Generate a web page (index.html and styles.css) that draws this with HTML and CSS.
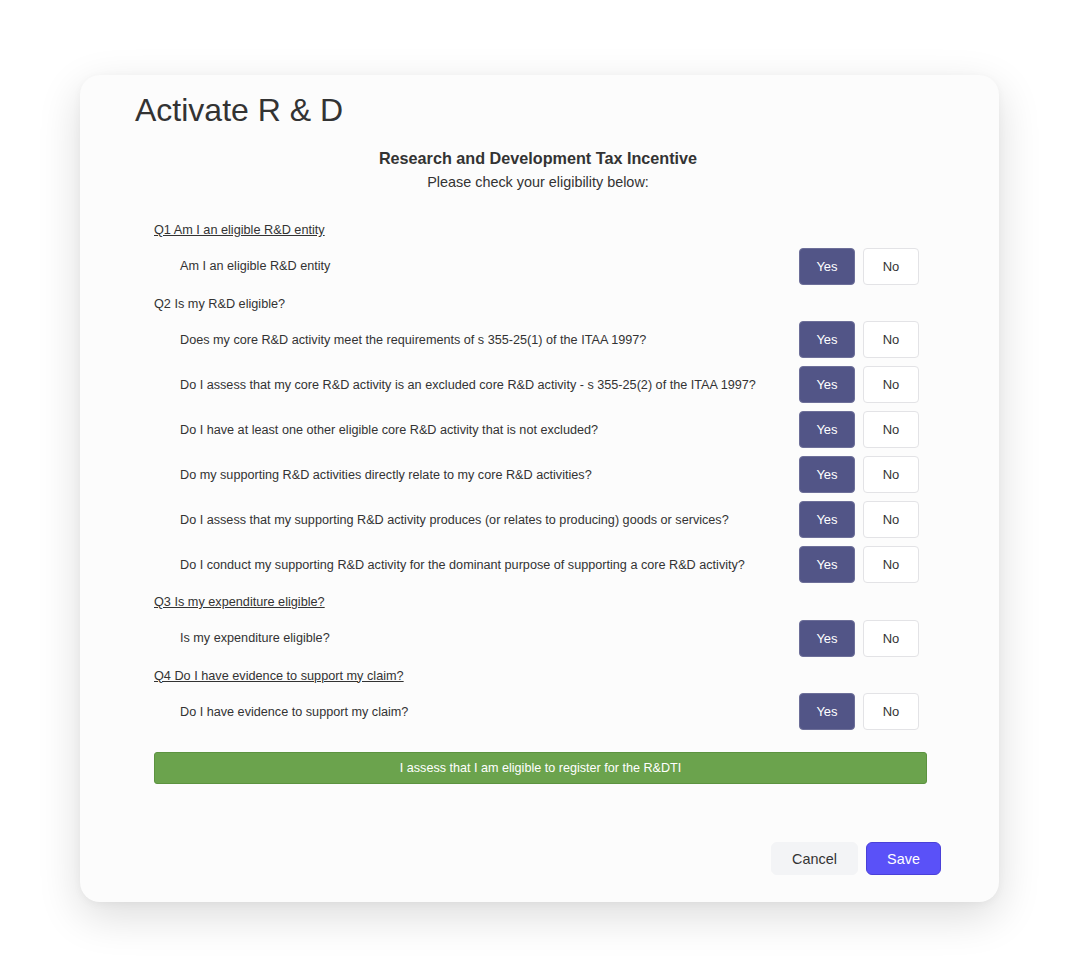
FILE: index.html
```html
<!DOCTYPE html>
<html lang="en">
<head>
<meta charset="utf-8">
<title>Activate R &amp; D</title>
<link rel="stylesheet" href="styles.css">
</head>
<body>
<div class="modal">
  <h1 class="title">Activate R &amp; D</h1>
  <div class="intro">
    <div class="intro-head">Research and Development Tax Incentive</div>
    <div class="intro-sub">Please check your eligibility below:</div>
  </div>
  <div class="form">
    <div class="section">
      <div class="q-label underline">Q1 Am I an eligible R&amp;D entity</div>
      <div class="items">
        <div class="item"><span class="item-text">Am I an eligible R&amp;D entity</span><div class="choice"><button class="btn-yes">Yes</button><button class="btn-no">No</button></div></div>
      </div>
    </div>
    <div class="section">
      <div class="q-label">Q2 Is my R&amp;D eligible?</div>
      <div class="items">
        <div class="item"><span class="item-text">Does my core R&amp;D activity meet the requirements of s 355-25(1) of the ITAA 1997?</span><div class="choice"><button class="btn-yes">Yes</button><button class="btn-no">No</button></div></div>
        <div class="item"><span class="item-text">Do I assess that my core R&amp;D activity is an excluded core R&amp;D activity - s 355-25(2) of the ITAA 1997?</span><div class="choice"><button class="btn-yes">Yes</button><button class="btn-no">No</button></div></div>
        <div class="item"><span class="item-text">Do I have at least one other eligible core R&amp;D activity that is not excluded?</span><div class="choice"><button class="btn-yes">Yes</button><button class="btn-no">No</button></div></div>
        <div class="item"><span class="item-text">Do my supporting R&amp;D activities directly relate to my core R&amp;D activities?</span><div class="choice"><button class="btn-yes">Yes</button><button class="btn-no">No</button></div></div>
        <div class="item"><span class="item-text">Do I assess that my supporting R&amp;D activity produces (or relates to producing) goods or services?</span><div class="choice"><button class="btn-yes">Yes</button><button class="btn-no">No</button></div></div>
        <div class="item"><span class="item-text">Do I conduct my supporting R&amp;D activity for the dominant purpose of supporting a core R&amp;D activity?</span><div class="choice"><button class="btn-yes">Yes</button><button class="btn-no">No</button></div></div>
      </div>
    </div>
    <div class="section">
      <div class="q-label underline">Q3 Is my expenditure eligible?</div>
      <div class="items">
        <div class="item"><span class="item-text">Is my expenditure eligible?</span><div class="choice"><button class="btn-yes">Yes</button><button class="btn-no">No</button></div></div>
      </div>
    </div>
    <div class="section">
      <div class="q-label underline">Q4 Do I have evidence to support my claim?</div>
      <div class="items">
        <div class="item"><span class="item-text">Do I have evidence to support my claim?</span><div class="choice"><button class="btn-yes">Yes</button><button class="btn-no">No</button></div></div>
      </div>
    </div>
    <div class="result">I assess that I am eligible to register for the R&amp;DTI</div>
  </div>
  <div class="footer">
    <button class="btn-cancel">Cancel</button>
    <button class="btn-save">Save</button>
  </div>
</div>
</body>
</html>
```

FILE: styles.css
```css
* { box-sizing: border-box; }
html, body { margin: 0; padding: 0; background: #ffffff; }
body {
  font-family: "Liberation Sans", Arial, sans-serif;
  color: #333333;
  width: 1085px;
  height: 980px;
  overflow: hidden;
}
.modal {
  margin: 75px 0 0 80px;
  width: 919px;
  height: 827px;
  background: #fcfcfc;
  border-radius: 20px;
  box-shadow: 0 14px 44px rgba(0, 0, 0, 0.14), 0 2px 8px rgba(0, 0, 0, 0.04);
  padding: 16px 58px 27px 55px;
  display: flex;
  flex-direction: column;
}
.title {
  margin: 0;
  font-size: 32px;
  line-height: 38px;
  font-weight: normal;
  color: #333333;
}
.intro {
  margin-top: 18px;
  text-align: center;
}
.intro-head {
  font-size: 16.2px;
  font-weight: bold;
  line-height: 22px;
  color: #333333;
}
.intro-sub {
  font-size: 14.4px;
  line-height: 22px;
  margin-top: 2px;
  color: #333333;
}
.form {
  margin: 28px 14px 0 19px;
  display: flex;
  flex-direction: column;
  gap: 10px;
}
.section {
  display: flex;
  flex-direction: column;
}
.q-label {
  font-size: 12.7px;
  line-height: 18px;
  color: #333333;
  margin-bottom: 8.5px;
}
.underline { text-decoration: underline; }
.items {
  display: flex;
  flex-direction: column;
  gap: 8px;
}
.item {
  display: flex;
  align-items: center;
  justify-content: space-between;
  padding-left: 26px;
  padding-right: 8px;
  height: 37px;
}
.item-text {
  font-size: 12.65px;
  color: #333333;
}
.choice {
  display: flex;
  gap: 8px;
}
.choice button {
  width: 56px;
  height: 37px;
  font-family: "Liberation Sans", Arial, sans-serif;
  font-size: 13px;
  border-radius: 4px;
  padding: 0;
  cursor: pointer;
}
.btn-yes {
  background: #525587;
  color: #ffffff;
  border: 1px solid #6d6f99;
}
.btn-no {
  background: #ffffff;
  color: #333333;
  border: 1px solid #e3e3e6;
}
.result {
  margin-top: 12px;
  height: 32px;
  background: #6ba34d;
  border: 1px solid #5c9340;
  border-radius: 3px;
  color: #ffffff;
  font-size: 12.6px;
  display: flex;
  align-items: center;
  justify-content: center;
}
.footer {
  margin-top: auto;
  display: flex;
  justify-content: flex-end;
  gap: 8px;
}
.footer button {
  height: 33px;
  font-family: "Liberation Sans", Arial, sans-serif;
  font-size: 14.4px;
  border-radius: 6px;
  cursor: pointer;
}
.btn-cancel {
  width: 87px;
  background: #f3f4f6;
  border: 1px solid #f3f4f6;
  color: #333333;
}
.btn-save {
  width: 75px;
  background: #5a51f8;
  border: 1px solid #4a40d8;
  color: #ffffff;
}
```
